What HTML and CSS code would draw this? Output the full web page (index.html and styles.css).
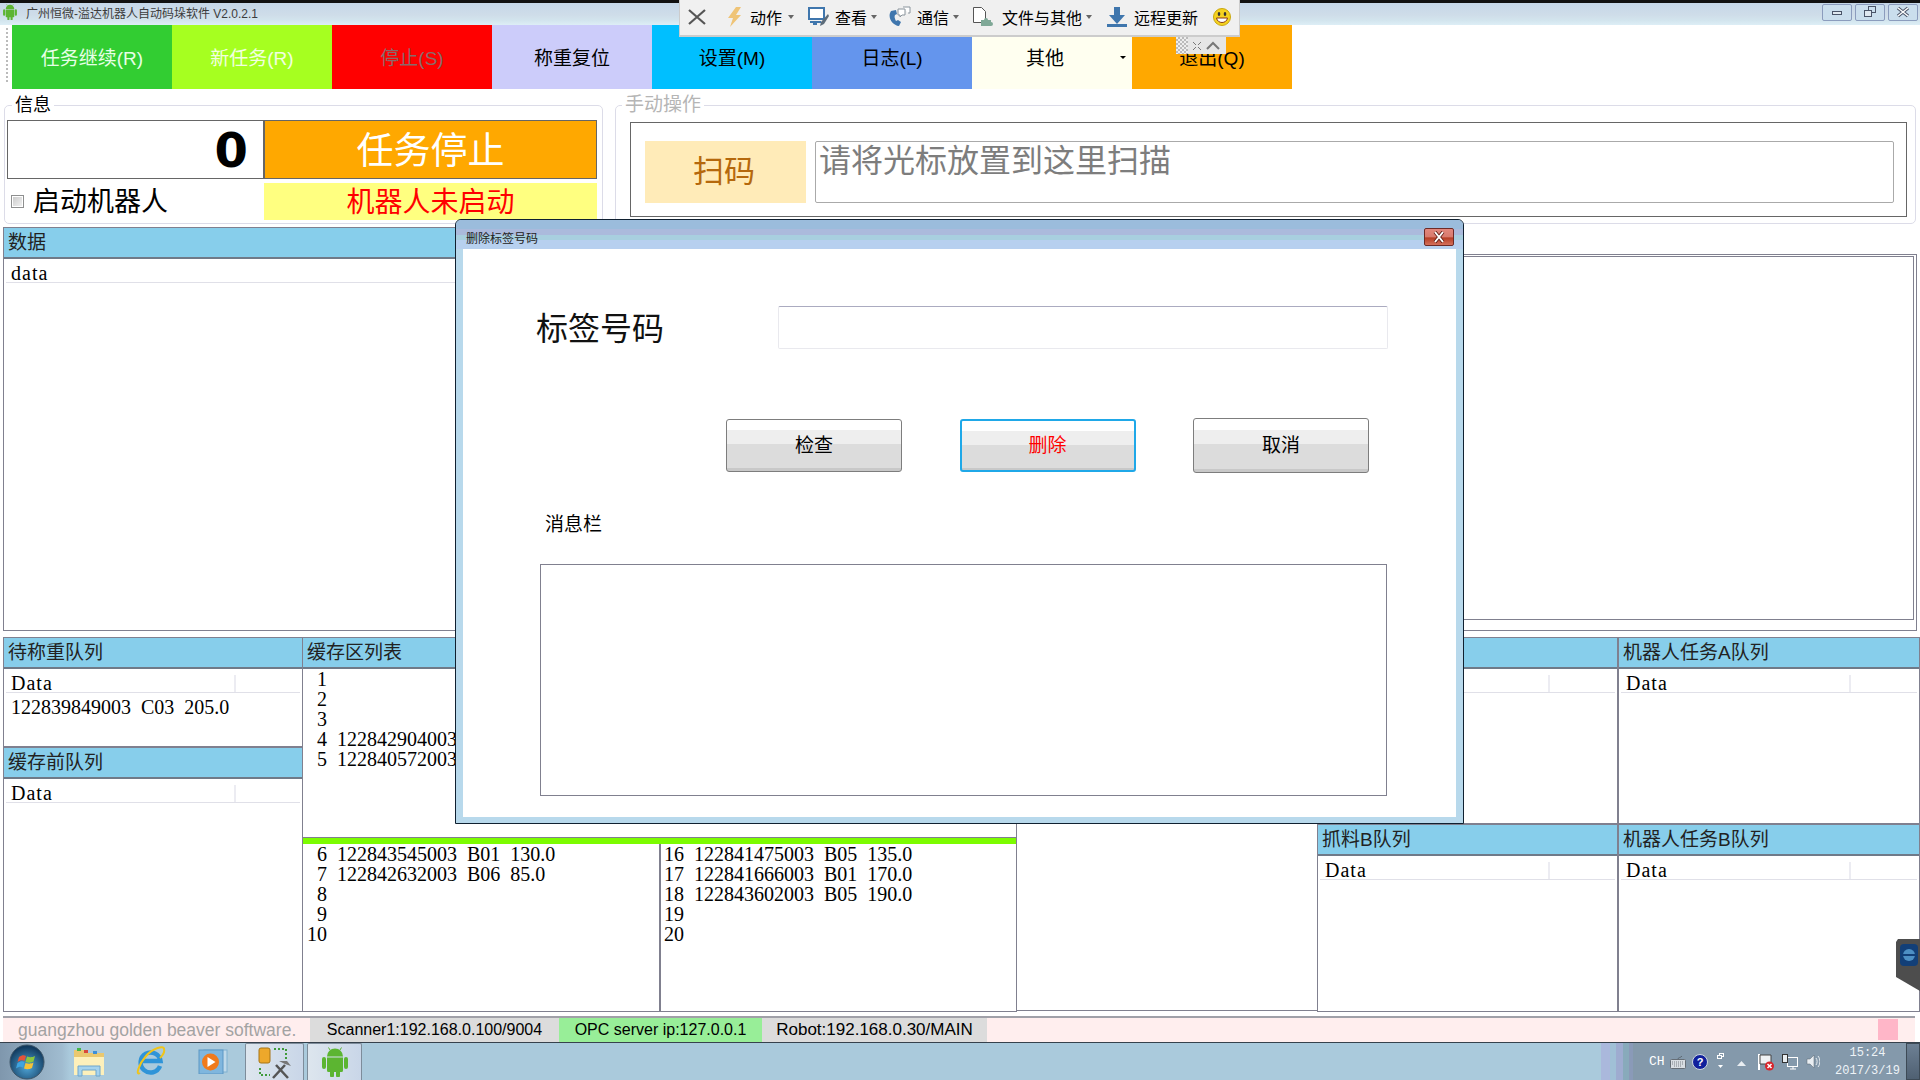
FILE: index.html
```html
<!DOCTYPE html>
<html lang="zh-CN">
<head>
<meta charset="UTF-8">
<title>广州恒微-溢达机器人自动码垛软件 V2.0.2.1</title>
<link rel="stylesheet" href="styles.css">
</head>
<body>

<svg class="defs" width="0" height="0">
    <symbol id="android" viewBox="0 0 26 30">
        <path fill="#5cb531" d="M5 9.500a8 8 0 0 1 16 0zM5 10.500h16v13a1.500 1.500 0 0 1-1.500 1.500H18v3.500a2 2 0 0 1-4 0V25h-2v3.500a2 2 0 0 1-4 0V25H6.500A1.500 1.500 0 0 1 5 23.500zM0 12a2 2 0 0 1 4 0v8a2 2 0 0 1-4 0zM22 12a2 2 0 0 1 4 0v8a2 2 0 0 1-4 0z"/>
        <path stroke="#5cb531" stroke-width="1" d="M8 3 6.500 .5M18 3l1.500-2.500"/>
    </symbol>
</svg>

<div id="app">
    <div class="titlebar">
        <svg class="title-logo" width="14" height="16"><use href="#android"/></svg>
        <span class="title-text">广州恒微-溢达机器人自动码垛软件 V2.0.2.1</span>
        <div class="win-btns">
            <span class="win-btn"><svg width="14" height="10"><rect x="2.500" y="4.500" width="9" height="3" fill="#dfe8f0" stroke="#4a5468"/></svg></span>
            <span class="win-btn"><svg width="14" height="12"><rect x="5.500" y=".5" width="7" height="6" fill="none" stroke="#4a5468"/><rect x="1.500" y="4.500" width="7" height="6" fill="#dfe8f0" stroke="#4a5468"/></svg></span>
            <span class="win-btn"><svg width="14" height="12"><path d="M2 2l10 8M12 2 2 10" stroke="#4a5468" stroke-width="3.500"/><path d="M2 2l10 8M12 2 2 10" stroke="#fff" stroke-width="1.500"/></svg></span>
        </div>
    </div>

    <div class="menu">
        <div class="grip"></div>
        <div class="menu-btn m-green">任务继续(R)</div>
        <div class="menu-btn m-lime">新任务(R)</div>
        <div class="menu-btn m-red">停止(S)</div>
        <div class="menu-btn m-lilac">称重复位</div>
        <div class="menu-btn m-sky">设置(M)</div>
        <div class="menu-btn m-blue">日志(L)</div>
        <div class="menu-btn m-ivory">其他<i class="drop"></i></div>
        <div class="menu-btn m-orange">退出(Q)</div>
    </div>

    <div class="ops">
        <fieldset class="group info">
            <legend>信息</legend>
            <div class="info-grid">
                <div class="counter">0</div>
                <div class="task-state">任务停止</div>
                <label class="robot-check"><span class="check"></span>启动机器人</label>
                <div class="robot-state">机器人未启动</div>
            </div>
        </fieldset>
        <fieldset class="group manual">
            <legend>手动操作</legend>
            <div class="scan-box">
                <div class="scan-btn">扫码</div>
                <div class="scan-input">请将光标放置到这里扫描</div>
            </div>
        </fieldset>
    </div>

    <div class="data-row">
        <div class="panel data-panel">
            <div class="panel-head">数据</div>
            <div class="list-head">data</div>
        </div>
        <div class="data-frame"><div class="data-inner"></div></div>
    </div>

    <div class="queues">
        <div class="q-col">
            <div class="panel q-short">
                <div class="panel-head">待称重队列</div>
                <div class="list-head">Data<i></i></div>
                <div class="row">122839849003 C03 205.0</div>
            </div>
            <div class="panel q-fill">
                <div class="panel-head">缓存前队列</div>
                <div class="list-head">Data<i></i></div>
            </div>
        </div>

        <div class="panel buffer">
            <div class="panel-head">缓存区列表</div>
            <div class="slots slots-top">
                <div class="slot"><b>1</b></div>
                <div class="slot"><b>2</b></div>
                <div class="slot"><b>3</b></div>
                <div class="slot"><b>4</b><span>122842904003</span></div>
                <div class="slot"><b>5</b><span>122840572003</span></div>
            </div>
            <div class="green-bar"></div>
            <div class="slot-cols">
                <div class="slots">
                    <div class="slot"><b>6</b><span>122843545003 B01 130.0</span></div>
                    <div class="slot"><b>7</b><span>122842632003 B06 85.0</span></div>
                    <div class="slot"><b>8</b></div>
                    <div class="slot"><b>9</b></div>
                    <div class="slot"><b>10</b></div>
                </div>
                <div class="slots">
                    <div class="slot"><b>16</b><span>122841475003 B05 135.0</span></div>
                    <div class="slot"><b>17</b><span>122841666003 B01 170.0</span></div>
                    <div class="slot"><b>18</b><span>122843602003 B05 190.0</span></div>
                    <div class="slot"><b>19</b></div>
                    <div class="slot"><b>20</b></div>
                </div>
            </div>
        </div>

        <div class="q-blank"></div>

        <div class="q-col">
            <div class="panel q-half">
                <div class="panel-head"></div>
                <div class="list-head"><i></i></div>
            </div>
            <div class="panel q-fill">
                <div class="panel-head">抓料B队列</div>
                <div class="list-head">Data<i></i></div>
            </div>
        </div>

        <div class="q-col">
            <div class="panel q-half">
                <div class="panel-head">机器人任务A队列</div>
                <div class="list-head">Data<i></i></div>
            </div>
            <div class="panel q-fill">
                <div class="panel-head">机器人任务B队列</div>
                <div class="list-head">Data<i></i></div>
            </div>
        </div>
    </div>

    <div class="statusbar">
        <span class="st-brand">guangzhou golden beaver software.</span>
        <span class="st-cell st-scan">Scanner1:192.168.0.100/9004</span>
        <span class="st-cell st-opc">OPC server ip:127.0.0.1</span>
        <span class="st-cell st-robot">Robot:192.168.0.30/MAIN</span>
        <span class="st-alarm"></span>
    </div>

    <div class="taskbar">
        <svg class="tb-orb" width="36" height="36" viewBox="0 0 36 36">
            <defs><radialGradient id="orb" cx=".5" cy=".65" r=".6"><stop offset="0" stop-color="#4fa6d8"/><stop offset="1" stop-color="#123a5e"/></radialGradient></defs>
            <circle cx="18" cy="18" r="17" fill="url(#orb)" stroke="#3d5568"/>
            <path fill="#e2543a" d="M10 13c3-2 5-2 7-1l-1.500 5c-2-1-4-1-7 1z"/>
            <path fill="#8cc63f" d="M18 12.500c3 1 5 1 8-.5l-1.500 5.500c-3 1.500-5 1.500-8 .5z"/>
            <path fill="#3fa4e0" d="M8.500 19c3-2 5-2 7-1L14 23.500c-2-1-4-1-7 1z"/>
            <path fill="#f6c236" d="M16.500 19c3 1 5 1 8-.5L23 24c-3 1.500-5 1.500-8 .5z"/>
        </svg>
        <svg class="tb-folder" width="32" height="30" viewBox="0 0 32 30">
            <path fill="#eac86f" d="M1 3h11l2 3h17v21H1z"/>
            <rect x="4" y="1" width="4" height="3" fill="#45b649"/><rect x="11" y="3" width="4" height="3" fill="#d9483b"/><rect x="20" y="4" width="4" height="3" fill="#3d8fd9"/>
            <path fill="#fdf0bb" d="M1 10h30v18H1z"/>
            <path fill="#a5d3ee" stroke="#6ea6cc" d="M5 29V19h22v10h-4v-6H9v6z"/>
        </svg>
        <svg class="tb-ie" width="30" height="31" viewBox="0 0 30 31">
            <path d="M24 20a10 10 0 1 1 .5-5H7" fill="none" stroke="#2f94d8" stroke-width="4.500"/>
            <path d="M4 27C-1 30 3 18 10 10S28-1 28 3c1 3-2 7-4 9" fill="none" stroke="#f0c419" stroke-width="2"/>
        </svg>
        <svg class="tb-media" width="30" height="25" viewBox="0 0 30 25">
            <rect x="6" y="1" width="23" height="22" fill="#bfd9ea" stroke="#7fb0d0"/>
            <rect x="1" y="1" width="24" height="24" fill="#7fb6de" stroke="#5d97c4"/>
            <circle cx="12.500" cy="13" r="8.500" fill="#f07a1c"/>
            <path fill="#fff" d="M9.500 8l8 5-8 5z"/>
        </svg>
        <span class="task-btn task-tool">
            <svg width="34" height="36" viewBox="0 0 34 36">
                <rect x="1" y="4" width="11" height="15" rx="2" fill="#eda82b" stroke="#a77516"/>
                <path d="M16 5h12v10M2 24v7h10" fill="none" stroke="#3f9a3a" stroke-width="2" stroke-dasharray="2 2"/>
                <path d="M15 34 27 21M18 21l12 13" stroke="#555" stroke-width="2.500"/>
                <path d="M21 17h8l4 5-6-2z" fill="#777"/>
            </svg>
        </span>
        <span class="task-btn task-droid"><svg width="26" height="30"><use href="#android"/></svg></span>

        <div class="tray">
            <span class="tray-ch">CH</span>
            <svg class="tray-kbd" width="16" height="14" viewBox="0 0 16 14"><rect x=".5" y="4.500" width="15" height="9" rx="1" fill="#d9dee2" stroke="#666e76"/><path d="M2 7h12M2 9h12M4 11h8" stroke="#7a8086" stroke-dasharray="1 1"/><path d="M8 4c0-2 3-1 4-3" fill="none" stroke="#5f6a74"/></svg>
            <span class="tray-help">?</span>
            <svg class="tray-win" width="7" height="17" viewBox="0 0 7 17"><rect x="2.500" y=".5" width="4" height="3" fill="none" stroke="#fff"/><rect x=".5" y="2.500" width="4" height="3" fill="#8499ab" stroke="#fff"/><path d="M1 12h5l-2.500 3z" fill="#fff"/></svg>
            <svg class="tray-up" width="9" height="5"><path d="M0 5 4.500 0 9 5z" fill="#e9eef2"/></svg>
            <svg class="tray-flag" width="16" height="18" viewBox="0 0 16 18"><path d="M1 1v16" stroke="#fff" stroke-width="2"/><path d="M2 2h11v9H2z" fill="#eef1f4" stroke="#444"/><circle cx="11.500" cy="13" r="4.500" fill="#d8232a"/><path d="M9.500 11l4 4M13.500 11l-4 4" stroke="#fff" stroke-width="1.500"/></svg>
            <svg class="tray-net" width="16" height="16" viewBox="0 0 16 16"><rect x="5.500" y="3.500" width="10" height="9" fill="#8499ab" stroke="#fff"/><rect x=".5" y=".5" width="5" height="8" fill="#e8edf0" stroke="#333"/><path d="M8 15h6M11 12v3" stroke="#fff"/></svg>
            <svg class="tray-vol" width="14" height="15" viewBox="0 0 14 15"><path d="M1 5h3l4-4v13l-4-4H1z" fill="#e9eef2" stroke="#5a6672" stroke-width=".5"/><path d="M10 4c1.500 2 1.500 5 0 7M12 2c2.500 3 2.500 8 0 11" fill="none" stroke="#e9eef2"/></svg>
            <div class="clock"><span>15:24</span><span>2017/3/19</span></div>
            <span class="show-desktop"></span>
        </div>
    </div>
</div>

<!-- floating remote tool bar -->
<div class="remote-bar">
    <svg class="rb-close" width="18" height="16"><path d="M1 1l16 14M17 1 1 15" stroke="#555" stroke-width="2.200"/></svg>
    <div class="rb-item">
        <svg width="15" height="20"><path fill="#efc477" d="M9 0h5L9 8h5L3 20l3-9H1z"/></svg>
        <span>动作</span><i class="caret"></i>
    </div>
    <div class="rb-item rb-tight">
        <svg width="21" height="20"><rect x="1" y="1" width="15" height="11" fill="#fff" stroke="#3f76ad" stroke-width="2"/><path d="M2 14h11v2H9v2H5v-2H2z" fill="#3f76ad"/><path d="M20 7l-7 8 -1 4 4-2 5-8z" fill="#5d6c7a"/></svg>
        <span>查看</span><i class="caret"></i>
    </div>
    <div class="rb-item rb-tight">
        <svg width="23" height="22"><path d="M3 5c-4 6 1 14 8 15l2-4-3-2-2 1c-1-2-2-4-1-6l2-1-1-4z" fill="#3f76ad"/><path d="M10 3h7v6h-3l-2 2V9h-2zM15 1h7v6h-2" fill="#fff" stroke="#8a949c"/></svg>
        <span>通信</span><i class="caret"></i>
    </div>
    <div class="rb-item rb-file">
        <svg width="24" height="22"><path d="M1.500 1.500h8l4 4v11h-12z" fill="#fff" stroke="#555"/><path d="M9 20v-6h3a2 2 0 1 1 4 0h3v2a2 2 0 1 1 0 4z" fill="#7fa897"/></svg>
        <span>文件与其他</span><i class="caret"></i>
    </div>
    <div class="rb-item rb-dl">
        <svg width="20" height="20"><path d="M7 0h6v8h5l-8 9-8-9h5z" fill="#3f76ad"/><rect y="17" width="20" height="3" fill="#3f76ad"/></svg>
        <span>远程更新</span>
    </div>
    <svg class="rb-smile" width="18" height="18"><circle cx="9" cy="9" r="8.500" fill="#f5d21f" stroke="#c9a70f"/><ellipse cx="6" cy="6" rx="1.300" ry="2" fill="#333"/><ellipse cx="12" cy="6" rx="1.300" ry="2" fill="#333"/><path d="M3.500 10h11c-1 6-10 6-11 0z" fill="#fff" stroke="#8a3a14"/></svg>
</div>
<div class="remote-tab">
    <i class="tab-dots"></i>
    <svg width="10" height="10"><path d="M1 1l3 3M9 1 6 4M1 9l3-3M9 9 6 6" stroke="#777"/></svg>
    <svg width="14" height="9"><path d="M1 8l6-6 6 6" fill="none" stroke="#777" stroke-width="2"/></svg>
</div>

<!-- dialog -->
<div class="dialog">
    <div class="dialog-title">
        <span>删除标签号码</span>
        <span class="dialog-close"><svg width="12" height="12"><path d="M2 1l8 10M10 1 2 11" stroke="#5a1a12" stroke-width="3.500"/><path d="M2 1l8 10M10 1 2 11" stroke="#fff" stroke-width="2"/></svg></span>
    </div>
    <div class="dialog-body">
        <div class="tag-row">
            <label class="tag-label">标签号码</label>
            <div class="tag-input"></div>
        </div>
        <div class="dialog-btns">
            <div class="btn">检查</div>
            <div class="btn btn-primary">删除</div>
            <div class="btn btn-cancel">取消</div>
        </div>
        <div class="msg-label">消息栏</div>
        <div class="msg-box"></div>
    </div>
</div>

<svg class="side-tab" width="25" height="52" viewBox="0 0 25 52">
    <path fill="#4d4d4d" d="M3 0h22v52L1 38V3z"/>
    <rect x="5" y="5" width="18" height="22" rx="4" fill="#123f78"/>
    <circle cx="14" cy="16" r="6" fill="#4d8fc4"/>
    <path d="M8 16h12" stroke="#123f78" stroke-width="2"/>
</svg>

</body>
</html>
```

FILE: styles.css
```css
* {
    box-sizing: border-box;
}
html, body {
    margin: 0;
    padding: 0;
    height: 1080px;
    overflow: hidden;
}
body {
    position: relative;
    background: #fff;
    color: #000;
    font-family: "Liberation Sans", "Noto Sans CJK SC", sans-serif;
}
.defs {
    position: absolute;
}
#app {
    display: flex;
    flex-direction: column;
    width: 1920px;
    height: 1080px;
}

/* title bar */
.titlebar {
    display: flex;
    align-items: center;
    height: 25px;
    padding: 0 2px 4px 3px;
    flex: none;
    border-top: 3px solid #111;
    background: linear-gradient(to bottom, #c5d7e8 0, #cfdde9 55%, #d3e5ee 80%, #ddeef6 100%);
}
.title-logo {
    flex: none;
    margin-right: 9px;
}
.title-text {
    font-size: 12px;
    color: #3c3c3c;
    white-space: nowrap;
}
.win-btns {
    display: flex;
    gap: 3px;
    margin-left: auto;
}
.win-btn {
    display: flex;
    align-items: center;
    justify-content: center;
    width: 30px;
    height: 17px;
    border: 1px solid #8b9cbd;
    border-radius: 2px;
    background: #cadeed;
}

/* coloured command buttons */
.menu {
    display: flex;
    height: 64px;
    flex: none;
    position: relative;
    padding-left: 12px;
}
.grip {
    position: absolute;
    left: 6px;
    top: 3px;
    height: 54px;
    border-left: 2px dotted #bbb;
}
.menu-btn {
    position: relative;
    display: flex;
    align-items: center;
    justify-content: center;
    width: 160px;
    font-size: 19px;
    padding-bottom: 2px;
}
.m-green { background: #32cd32; color: #e6ffe6; }
.m-lime { background: #a6ff20; color: #f2ffe0; }
.m-red { background: #ff0000; color: #8a6a6a; }
.m-lilac { background: #ccccfa; }
.m-sky { background: #00bfff; }
.m-blue { background: #6495ed; }
.m-ivory { background: #fffff0; padding-right: 14px; }
.m-orange { background: #ffa800; }
.drop {
    position: absolute;
    right: 6px;
    top: 31px;
    border-left: 3px solid transparent;
    border-right: 3px solid transparent;
    border-top: 3px solid #000;
}

/* info + manual operation */
.ops {
    display: flex;
    flex: none;
    height: 138px;
    padding: 5px 4px 0 4px;
    gap: 12px;
}
.group {
    margin: 0;
    min-width: 0;
    height: 130px;
    border: 1px solid #dcdce8;
    border-radius: 5px;
}
.group legend {
    font-size: 18px;
    line-height: 22px;
    padding: 0 3px;
    margin-left: 5px;
}
.info {
    width: 599px;
    flex: none;
    padding: 4px 5px 0 2px;
}
.info-grid {
    display: grid;
    grid-template-columns: 257px 333px;
    grid-template-rows: 59px 37px;
    row-gap: 4px;
}
.counter {
    border: 1px solid #666;
    padding-right: 15px;
    text-align: right;
    font-family: "DejaVu Sans", sans-serif;
    font-size: 48px;
    font-weight: bold;
    line-height: 58px;
}
.task-state {
    border: 1px solid #666;
    background: #ffa800;
    color: #fff;
    font-size: 37px;
    line-height: 52px;
    padding-top: 5px;
    text-align: center;
}
.robot-check {
    display: flex;
    align-items: center;
    font-size: 27px;
    padding: 0 0 5px 4px;
}
.check {
    width: 13px;
    height: 13px;
    margin: 4px 9px 0 0;
    border: 1px solid #8e8f8f;
    background: linear-gradient(135deg, #c8c8c8, #f4f4f4);
    box-shadow: inset 0 0 0 1px #fff;
}
.robot-state {
    background: #ffff80;
    color: #f00;
    font-size: 28px;
    line-height: 37px;
    padding-top: 1px;
    text-align: center;
}
.manual {
    flex: 1;
    padding: 6px 8px 0 14px;
}
.manual legend {
    margin-left: -8px;
    font-size: 19px;
    color: #b5b5b5;
}
.scan-box {
    display: flex;
    gap: 9px;
    height: 95px;
    padding: 18px 12px 0 14px;
    border: 1px solid #666;
}
.scan-btn {
    width: 161px;
    height: 62px;
    padding-right: 3px;
    background: #ffebb8;
    color: #b5680c;
    font-size: 31px;
    line-height: 62px;
    text-align: center;
}
.scan-input {
    flex: 1;
    height: 62px;
    border: 1px solid #aaa;
    border-radius: 2px;
    padding-left: 3px;
    color: #7d7d7d;
    font-size: 32px;
    line-height: 38px;
}

/* panels */
.panel {
    border: 1px solid #80808f;
    background: #fff;
}
.panel-head {
    height: 31px;
    background: #87ceeb;
    border-bottom: 2px solid #6f7a88;
    padding-left: 4px;
    font-size: 19px;
    line-height: 30px;
    color: #222;
}
.list-head {
    position: relative;
    height: 24px;
    margin: 0 2px;
    padding-left: 5px;
    border-bottom: 1px solid #e0e0e8;
    font-family: "Liberation Serif", "Noto Sans CJK SC", serif;
    font-size: 20px;
    letter-spacing: 1px;
    line-height: 28px;
}
.list-head i {
    position: absolute;
    left: 228px;
    top: 6px;
    bottom: 0;
    border-left: 2px solid #ececf2;
}
.row, .slot {
    font-family: "Liberation Serif", "Noto Sans CJK SC", serif;
    font-size: 20px;
    line-height: 20px;
    word-spacing: 5px;
    white-space: pre;
}
.row {
    padding: 4px 0 0 7px;
}

.data-row {
    display: flex;
    flex: none;
    height: 404px;
    padding: 0 3px;
}
.data-panel {
    flex: 1;
}
.data-frame {
    width: 500px;
    margin-top: 27px;
    padding: 1px 2px 10px 0;
    border: 1px solid #80808f;
    border-left: 0;
    background: #fff;
}
.data-inner {
    height: 100%;
    border: 1px solid #80808f;
    border-left: 0;
}

.queues {
    display: grid;
    grid-template-columns: 300px 714px 300px 301px 302px;
    flex: none;
    height: 375px;
    margin: 6px 0 0 3px;
}
.q-col {
    display: flex;
    flex-direction: column;
    min-height: 0;
}
.q-short {
    height: 110px;
    flex: none;
}
.q-half {
    height: 187px;
    flex: none;
}
.q-fill {
    flex: 1;
}
.q-blank {
    border-bottom: 1px solid #80808f;
    margin-bottom: 1px;
}
.buffer {
    display: flex;
    flex-direction: column;
    border-left: 0;
}
.slots-top {
    height: 168px;
}
.slot {
    display: flex;
    height: 20px;
}
.slot b {
    width: 20px;
    margin: 0 10px 0 4px;
    font-weight: normal;
    text-align: right;
    flex: none;
}
.green-bar {
    height: 7px;
    border-top: 1px solid #80808f;
    background: #7cfc00;
}
.slot-cols {
    display: grid;
    grid-template-columns: 358px 1fr;
    flex: 1;
}
.slot-cols .slots:first-child {
    border-right: 2px solid #80808f;
}
.slot-cols .slots:last-child .slot b {
    margin-left: 3px;
}

/* status bar */
.statusbar {
    position: relative;
    display: flex;
    align-items: center;
    flex: none;
    height: 26px;
    margin: 4px 5px 0 3px;
    border-top: 2px solid #a0a0a8;
    background: #ffeeee;
    font-size: 16px;
}
.st-brand {
    width: 307px;
    padding-left: 15px;
    color: #a3a3a3;
    font-size: 17.500px;
    white-space: nowrap;
}
.st-cell {
    height: 24px;
    line-height: 24px;
    text-align: center;
    white-space: nowrap;
}
.st-scan { width: 249px; background: #dcdcdc; }
.st-opc { width: 203px; background: #98ee98; }
.st-robot { width: 225px; background: #dcdcdc; font-size: 17px; }
.st-alarm {
    position: absolute;
    right: 17px;
    top: 1px;
    width: 20px;
    height: 21px;
    background: #ffb6c8;
}

/* windows task bar */
.taskbar {
    display: flex;
    align-items: center;
    flex: 1;
    min-height: 0;
    border-top: 1px solid #36414c;
    background: linear-gradient(to right, #7f97ad 0, #a0bcd0 62px, #aacadc 70px, #aacadc 1601px, #aab8dc 1601px, #aab8dc 1610px, #a0c0d6 1610px, #a0c0d6 1616px, #9eacd0 1616px, #9eacd0 1623px, #88aabb 1623px, #88aabb 1629px, #8a9ab8 1629px, #8a9ab8 1633px, #8499ab 1633px);
}
.tb-orb { margin-left: 9px; flex: none; }
.tb-folder { margin-left: 28px; flex: none; }
.tb-ie { margin-left: 31px; flex: none; }
.tb-media { margin-left: 32px; flex: none; }
.task-btn {
    display: flex;
    align-items: center;
    justify-content: center;
    height: 37px;
    flex: none;
    border: 1px solid #7d8c9a;
    border-bottom: 0;
    border-radius: 2px 2px 0 0;
    background: linear-gradient(to right, #dde6ee, #c9d6e8);
}
.task-tool { width: 59px; margin-left: 17px; }
.task-droid { width: 55px; margin-left: 3px; }
.tray {
    display: flex;
    align-items: center;
    margin-left: auto;
    height: 100%;
    color: #fff;
}
.tray svg { flex: none; }
.tray-ch {
    font-family: "Liberation Mono", monospace;
    font-size: 13px;
    width: 13px;
    white-space: nowrap;
}
.tray-kbd { margin-left: 8px; }
.tray-help {
    width: 16px;
    height: 16px;
    margin-left: 6px;
    border-radius: 50%;
    border: 1px solid #cfd8e0;
    background: #10209c;
    font-size: 11px;
    font-weight: bold;
    line-height: 14px;
    text-align: center;
}
.tray-win { margin-left: 9px; }
.tray-up { margin-left: 13px; margin-top: 3px; }
.tray-flag { margin-left: 12px; }
.tray-net { margin-left: 8px; }
.tray-vol { margin-left: 8px; }
.clock {
    display: flex;
    flex-direction: column;
    align-items: center;
    width: 59px;
    margin-left: 18px;
    font-family: "Liberation Mono", monospace;
    font-size: 12px;
    line-height: 18px;
    color: #eef3f7;
    white-space: nowrap;
}
.show-desktop {
    width: 14px;
    height: 100%;
    margin-left: 9px;
    border: 1px solid #3d4a56;
    background: linear-gradient(to bottom, #6d8094, #4f6072);
}

/* floating remote control bar */
.remote-bar {
    position: absolute;
    left: 679px;
    top: 0;
    display: flex;
    align-items: center;
    width: 561px;
    height: 37px;
    padding: 0 0 2px 8px;
    background: #f0f0f0;
    border-bottom: 2px solid #ccc;
    border-right: 1px solid #ccc;
    border-left: 1px solid #ccc;
    font-size: 16px;
}
.rb-close { margin-right: 21px; flex: none; }
.rb-item {
    display: flex;
    align-items: center;
    gap: 8px;
    margin-right: 14px;
    white-space: nowrap;
}
.rb-tight { gap: 6px; margin-right: 11px; }
.rb-file { gap: 6px; margin-right: 15px; margin-left: 2px; }
.rb-dl { gap: 7px; margin-right: 15px; }
.caret {
    margin-left: -2px;
    border-left: 3px solid transparent;
    border-right: 3px solid transparent;
    border-top: 4px solid #666;
}
.rb-smile { flex: none; }
.remote-tab {
    position: absolute;
    left: 1176px;
    top: 37px;
    display: flex;
    align-items: center;
    gap: 4px;
    width: 50px;
    height: 17px;
    background: #e6e6e6;
}
.tab-dots {
    width: 12px;
    height: 17px;
    background: repeating-conic-gradient(#bbb 0 25%, #eee 0 50%) 0 0 / 4px 4px;
}

/* delete tag dialog */
.dialog {
    position: absolute;
    left: 455px;
    top: 219px;
    display: flex;
    flex-direction: column;
    width: 1009px;
    height: 605px;
    border: 1px solid #102030;
    border-radius: 6px 6px 0 0;
    background: #b8d9ec;
}
.dialog-title {
    display: flex;
    align-items: center;
    justify-content: space-between;
    height: 29px;
    flex: none;
    padding: 5px 9px 0 10px;
    border-radius: 5px 5px 0 0;
    background: linear-gradient(to bottom, #9bbcdc 0, #9bbcdc 30%, #abbadc 30%, #abbadc 50%, #a8cfdf 50%, #a8cfdf 70%, #b7d0ef 70%);
    font-size: 12px;
    color: #222;
}
.dialog-close {
    display: flex;
    align-items: center;
    justify-content: center;
    width: 30px;
    height: 18px;
    border: 1px solid #6e2a26;
    border-radius: 2px;
    background: linear-gradient(to bottom, #e2877c 0, #d87a6d 50%, #b63d24 55%, #d4705c 100%);
}
.dialog-body {
    flex: 1;
    margin: 0 7px 6px 7px;
    padding: 57px 0 0 73px;
    background: #fff;
}
.tag-row {
    display: flex;
    align-items: center;
    height: 43px;
}
.tag-label {
    width: 242px;
    padding-bottom: 4px;
    font-size: 32px;
    color: #111;
}
.tag-input {
    width: 610px;
    height: 43px;
    border: 1px solid #e9e9ee;
    border-top-color: #ababc0;
    border-radius: 2px;
}
.dialog-btns {
    display: flex;
    align-items: center;
    gap: 57.500px;
    height: 55px;
    margin: 69px 0 0 190px;
}
.btn {
    width: 176px;
    height: 53px;
    border: 1px solid #7d7d7d;
    border-radius: 3px;
    background: linear-gradient(to bottom, #fff 0, #fff 20%, #eee 20%, #eee 48%, #dcdcdc 48%, #dcdcdc 95%, #c8c8c8 95%);
    font-size: 19px;
    line-height: 52px;
    text-align: center;
}
.btn-primary {
    border: 2px solid #1fa8e8;
    color: #f00;
    line-height: 50px;
}
.btn-cancel {
    height: 55px;
    line-height: 54px;
}
.msg-label {
    margin: 40px 0 0 9px;
    font-size: 19px;
    line-height: 24px;
}
.msg-box {
    width: 847px;
    height: 232px;
    margin: 27px 0 0 4px;
    border: 1px solid #80808f;
}

.side-tab {
    position: absolute;
    left: 1895px;
    top: 939px;
}
```
